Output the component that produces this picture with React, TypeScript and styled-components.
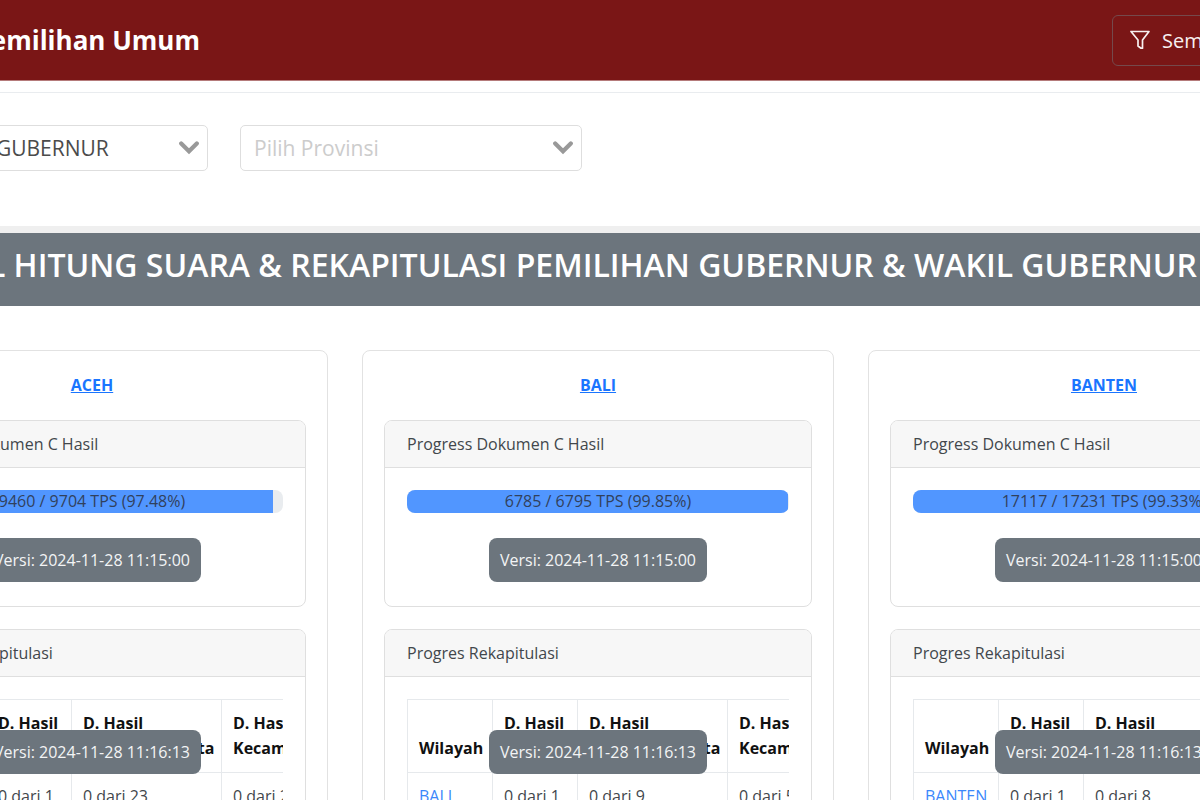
import React from "react";
import styled, { createGlobalStyle } from "styled-components";

const GlobalStyle = createGlobalStyle`
  *, *::before, *::after { box-sizing: border-box; }
  body {
    margin: 0;
    background: #fff;
    color: #42474c;
    font-family: "Open Sans", "Noto Sans", sans-serif;
    font-size: 16px;
    line-height: 25px;
  }
  h1, h2, h3, p { margin: 0; }
`;

const Page = styled.div`
  height: 100vh;
  overflow: hidden;
`;

const Header = styled.header`
  display: flex;
  align-items: center;
  justify-content: space-between;
  height: 81px;
  background: #7a1616;
  border-bottom: 1px solid #b57b7b;
  color: #fff;
`;

const Brand = styled.div`
  display: flex;
  justify-content: flex-end;
  width: 200px;
  overflow: hidden;
  white-space: nowrap;
  font-size: 26px;
  line-height: 36px;
  font-weight: 700;
`;

const HeaderActions = styled.div`
  flex: none;
  width: 88px;
`;

const OutlineButton = styled.button`
  display: flex;
  align-items: center;
  gap: 12px;
  height: 51px;
  padding: 0 17px;
  border: 1px solid #75494c;
  border-radius: 6px;
  background: transparent;
  color: #f8f0f0;
  font: inherit;
  font-size: 20px;
  white-space: nowrap;
`;

const FunnelIcon = styled.svg`
  width: 20px;
  height: 20px;
`;

const Filters = styled.section`
  display: flex;
  gap: 32px;
  height: 134px;
  margin-top: 11px;
  margin-left: -134px;
  padding-top: 32px;
  border-top: 1px solid #e9ecef;
`;

const SelectBox = styled.label`
  display: grid;
  align-items: center;
  flex: none;
  width: 342px;
  height: 46px;
`;

const Select = styled.select<{ $empty?: boolean }>`
  grid-area: 1 / 1;
  width: 100%;
  height: 46px;
  padding: 0 48px 0 13px;
  appearance: none;
  border: 1px solid #dedede;
  border-radius: 5px;
  background: #fff;
  color: ${(p) => (p.$empty ? "#cccccc" : "#4b4b4b")};
  font: inherit;
  font-size: 21px;
`;

const Chevron = styled.svg`
  grid-area: 1 / 1;
  justify-self: end;
  width: 20px;
  height: 14px;
  margin-right: 9px;
  pointer-events: none;
`;

const Banner = styled.section`
  display: flex;
  justify-content: flex-end;
  height: 80px;
  padding: 9px 3px 0 0;
  border-top: 7px solid #efefef;
  background: #6c757d;
`;

const BannerTitle = styled.h1`
  flex: none;
  color: #fff;
  font-size: 32px;
  line-height: 46px;
  font-weight: 600;
  white-space: nowrap;
`;

const Regions = styled.main`
  display: flex;
  gap: 34px;
  margin: 44px 0 0 -144px;
`;

const RegionCard = styled.article`
  flex: none;
  width: 472px;
  padding: 22px 21px;
  border: 1px solid #e2e2e2;
  border-radius: 8px;
`;

const RegionTitle = styled.h2`
  margin-bottom: 22px;
  text-align: center;
  font-size: 16px;
  line-height: 25px;
  font-weight: 700;
`;

const Link = styled.a<{ $plain?: boolean }>`
  color: ${(p) => (p.$plain ? "#3b87fb" : "#1a75ff")};
  text-decoration: ${(p) => (p.$plain ? "none" : "underline")};
`;

const Panel = styled.section`
  margin-bottom: 22px;
  border: 1px solid #dfdfdf;
  border-radius: 8px;
`;

const PanelHeader = styled.h3`
  padding: 11px 22px;
  border-bottom: 1px solid #dfdfdf;
  border-radius: 7px 7px 0 0;
  background: #f7f7f7;
  font-size: 16px;
  line-height: 24px;
  font-weight: 400;
`;

const PanelBody = styled.div`
  padding: 22px;
`;

const Track = styled.div`
  display: grid;
  height: 23px;
  margin-bottom: 25px;
  overflow: hidden;
  border-radius: 8px;
  background: #e9ecef;
`;

const Fill = styled.div`
  grid-area: 1 / 1;
  background: #5196ff;
`;

const TrackLabel = styled.span`
  grid-area: 1 / 1;
  text-align: center;
  line-height: 23px;
  color: #31415c;
`;

const Version = styled.p`
  width: max-content;
  margin: 0 auto 2px;
  padding: 9px 11px;
  border-radius: 8px;
  background: #6c757d;
  color: #f3f4f5;
  line-height: 26px;
`;

const TableArea = styled.div`
  position: relative;
  overflow: hidden;
`;

const FloatingVersion = styled.div`
  position: absolute;
  top: 31px;
  left: 0;
  right: 0;
`;

const Table = styled.table`
  width: 500px;
  table-layout: fixed;
  border-collapse: collapse;
`;

const Col = styled.col<{ $w: number }>`
  width: ${(p) => p.$w}px;
`;

const Th = styled.th`
  padding: 11px;
  border: 1px solid #e6e9ec;
  color: #111;
  text-align: left;
  vertical-align: bottom;
  white-space: nowrap;
`;

const Td = styled.td`
  padding: 11px;
  border: 1px solid #e6e9ec;
  white-space: nowrap;
`;

type Region = {
  name: string;
  done: number;
  total: number;
  percent: string;
  cells: string[];
};

const regions: Region[] = [
  { name: "ACEH", done: 9460, total: 9704, percent: "97.48", cells: ["0 dari 1", "0 dari 23", "0 dari 290"] },
  { name: "BALI", done: 6785, total: 6795, percent: "99.85", cells: ["0 dari 1", "0 dari 9", "0 dari 57"] },
  { name: "BANTEN", done: 17117, total: 17231, percent: "99.33", cells: ["0 dari 1", "0 dari 8", "0 dari 155"] },
];

function Dropdown({ label, value, empty }: { label: string; value: string; empty?: boolean }) {
  return (
    <SelectBox>
      <Select aria-label={label} $empty={empty} defaultValue={value}>
        <option>{value}</option>
      </Select>
      <Chevron viewBox="0 0 20 14" aria-hidden="true">
        <path d="M2.2 2.5 10 10.3 17.8 2.5" fill="none" stroke="#999" strokeWidth="4.2" strokeLinecap="round" />
      </Chevron>
    </SelectBox>
  );
}

function RegionColumn({ region }: { region: Region }) {
  return (
    <RegionCard>
      <RegionTitle>
        <Link href="#">{region.name}</Link>
      </RegionTitle>
      <Panel>
        <PanelHeader>Progress Dokumen C Hasil</PanelHeader>
        <PanelBody>
          <Track>
            <Fill style={{ width: `${region.percent}%` }} />
            <TrackLabel>
              {`${region.done} / ${region.total} TPS (${region.percent}%)`}
            </TrackLabel>
          </Track>
          <Version>Versi: 2024-11-28 11:15:00</Version>
        </PanelBody>
      </Panel>
      <Panel>
        <PanelHeader>Progres Rekapitulasi</PanelHeader>
        <PanelBody>
          <TableArea>
            <Table>
              <colgroup>
                <Col $w={85} />
                <Col $w={85} />
                <Col $w={150} />
                <Col $w={180} />
              </colgroup>
              <thead>
                <tr>
                  <Th>Wilayah</Th>
                  <Th>D. Hasil<br />Prov</Th>
                  <Th>D. Hasil<br />Kabupaten/Kota</Th>
                  <Th>D. Hasil<br />Kecamatan</Th>
                </tr>
              </thead>
              <tbody>
                <tr>
                  <Td><Link href="#" $plain>{region.name}</Link></Td>
                  {region.cells.map((cell) => (
                    <Td key={cell}>{cell}</Td>
                  ))}
                </tr>
              </tbody>
            </Table>
            <FloatingVersion>
              <Version>Versi: 2024-11-28 11:16:13</Version>
            </FloatingVersion>
          </TableArea>
        </PanelBody>
      </Panel>
    </RegionCard>
  );
}

export default function App() {
  return (
    <Page>
      <GlobalStyle />
      <Header>
        <Brand>Pemilihan Umum</Brand>
        <HeaderActions>
          <OutlineButton type="button">
            <FunnelIcon viewBox="0 0 20 20" aria-hidden="true">
              <path
                d="M1 1.5h18L12.5 10v8.2H11L8 16v-6Z"
                fill="none"
                stroke="currentColor"
                strokeWidth="1.7"
                strokeLinejoin="round"
              />
            </FunnelIcon>
            Semua
          </OutlineButton>
        </HeaderActions>
      </Header>
      <Filters>
        <Dropdown label="Jenis pemilihan" value="PEMILIHAN GUBERNUR" />
        <Dropdown label="Provinsi" value="Pilih Provinsi" empty />
      </Filters>
      <Banner>
        <BannerTitle>
          HASIL HITUNG SUARA &amp; REKAPITULASI PEMILIHAN GUBERNUR &amp; WAKIL GUBERNUR
        </BannerTitle>
      </Banner>
      <Regions>
        {regions.map((region) => (
          <RegionColumn key={region.name} region={region} />
        ))}
      </Regions>
    </Page>
  );
}
